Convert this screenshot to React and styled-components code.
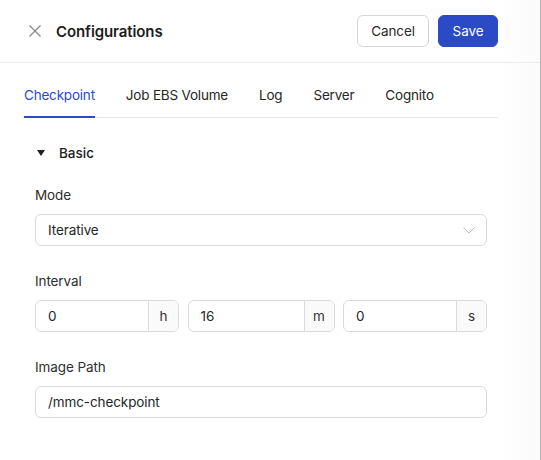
import styled, { createGlobalStyle } from 'styled-components';

const GlobalStyle = createGlobalStyle`
  html, body {
    margin: 0;
    padding: 0;
    background: #ffffff;
    font-family: Inter, "Noto Sans", sans-serif;
    color: #1f1f1f;
  }
`;

const Panel = styled.div`
  width: 540px;
  height: 460px;
  border-right: 1px solid #b4b4b4;
  background: linear-gradient(to right, #ffffff 92%, #fbfbfb 100%);
  box-sizing: content-box;
`;

const Header = styled.header`
  display: flex;
  align-items: center;
  height: 63px;
  padding: 0 42px 0 28px;
  border-bottom: 1px solid #ececec;
  box-sizing: border-box;
`;

const CloseButton = styled.button`
  display: flex;
  align-items: center;
  justify-content: center;
  width: 14px;
  height: 14px;
  padding: 0;
  border: none;
  background: none;
  margin-right: 14px;
`;

const Title = styled.h1`
  margin: 0;
  flex: 1;
  font-size: 15px;
  font-weight: 600;
  color: #1d1d1d;
  letter-spacing: -0.1px;
`;

const Button = styled.button`
  height: 32px;
  padding: 0;
  border-radius: 6px;
  font-family: inherit;
  font-size: 13.5px;
  letter-spacing: -0.1px;
  border: 1px solid ${(p) => (p.$primary ? '#2b4bc6' : '#d6d6d6')};
  background: ${(p) => (p.$primary ? '#2b4bc6' : '#ffffff')};
  color: ${(p) => (p.$primary ? '#ffffff' : '#2a2a2a')};
  margin-left: ${(p) => (p.$primary ? '9px' : '0')};
  width: ${(p) => p.$w};
`;

const Body = styled.div`
  padding: 0 42px 0 23px;
`;

const Tabs = styled.nav`
  display: flex;
  gap: 31px;
  height: 54px;
  align-items: stretch;
  border-bottom: 1px solid #e6e6e6;
  padding-left: 1px;
`;

const Tab = styled.div`
  display: flex;
  align-items: center;
  padding-top: 9px;
  font-size: 13.5px;
  letter-spacing: -0.2px;
  color: ${(p) => (p.$active ? '#2b4bc6' : '#262626')};
  box-shadow: ${(p) => (p.$active ? 'inset 0 -2px 0 #2b4bc6' : 'none')};
  margin-bottom: -1px;
`;

const Section = styled.section`
  padding: 23px 11px 0 12px;
`;

const SectionHead = styled.div`
  display: flex;
  align-items: center;
  gap: 14px;
  height: 24px;
  font-size: 13.5px;
  font-weight: 500;
  color: #222;
  margin-bottom: 20px;
  padding-left: 2px;
`;

const Field = styled.div`
  margin-bottom: 25px;
`;

const Label = styled.div`
  font-size: 13.5px;
  letter-spacing: -0.1px;
  color: #2e2e2e;
  height: 20px;
  line-height: 20px;
  margin-bottom: 9px;
`;

const Select = styled.div`
  display: flex;
  align-items: center;
  justify-content: space-between;
  height: 32px;
  padding: 0 11px 0 12px;
  border: 1px solid #dadada;
  border-radius: 6px;
  font-size: 13.5px;
  letter-spacing: -0.1px;
  color: #262626;
  box-sizing: border-box;
`;

const Row = styled.div`
  display: grid;
  grid-template-columns: 144px 147px 144px;
  column-gap: 8.5px;
`;

const Group = styled.div`
  display: flex;
  height: 32px;
  border: 1px solid #dadada;
  border-radius: 6px;
  overflow: hidden;
  box-sizing: border-box;
`;

const GroupValue = styled.div`
  flex: 1;
  display: flex;
  align-items: center;
  padding-left: 12px;
  font-size: 13.5px;
  color: #262626;
`;

const Addon = styled.div`
  width: 29px;
  display: flex;
  align-items: center;
  justify-content: center;
  border-left: 1px solid #dadada;
  background: #fafafa;
  font-size: 13.5px;
  color: #333;
`;

const TextInput = styled.div`
  display: flex;
  align-items: center;
  height: 32px;
  padding-left: 12px;
  border: 1px solid #dadada;
  border-radius: 6px;
  font-size: 13.5px;
  letter-spacing: -0.1px;
  color: #262626;
  box-sizing: border-box;
`;

const tabs = ['Checkpoint', 'Job EBS Volume', 'Log', 'Server', 'Cognito'];
const interval = [
  { v: '0', u: 'h' },
  { v: '16', u: 'm' },
  { v: '0', u: 's' },
];

export default function App() {
  return (
    <>
      <GlobalStyle />
      <Panel>
        <Header>
          <CloseButton aria-label="close">
            <svg width="14" height="14" viewBox="0 0 14 14">
              <path d="M1.5 1.5l11 11M12.5 1.5l-11 11" stroke="#8a8a8a" strokeWidth="1.3" />
            </svg>
          </CloseButton>
          <Title>Configurations</Title>
          <Button $w="72px">Cancel</Button>
          <Button $primary $w="60px">Save</Button>
        </Header>
        <Body>
          <Tabs>
            {tabs.map((t, i) => (
              <Tab key={t} $active={i === 0}>{t}</Tab>
            ))}
          </Tabs>
          <Section>
            <SectionHead>
              <svg width="8" height="6" viewBox="0 0 8 6">
                <path d="M0 0h8L4 6z" fill="#222" />
              </svg>
              Basic
            </SectionHead>
            <Field>
              <Label>Mode</Label>
              <Select>
                Iterative
                <svg width="12" height="7" viewBox="0 0 12 7">
                  <path d="M0.5 0.5l5.5 5.5 5.5-5.5" stroke="#bcbcbc" strokeWidth="1" fill="none" />
                </svg>
              </Select>
            </Field>
            <Field>
              <Label>Interval</Label>
              <Row>
                {interval.map((it) => (
                  <Group key={it.u}>
                    <GroupValue>{it.v}</GroupValue>
                    <Addon>{it.u}</Addon>
                  </Group>
                ))}
              </Row>
            </Field>
            <Field>
              <Label>Image Path</Label>
              <TextInput>/mmc-checkpoint</TextInput>
            </Field>
          </Section>
        </Body>
      </Panel>
    </>
  );
}
